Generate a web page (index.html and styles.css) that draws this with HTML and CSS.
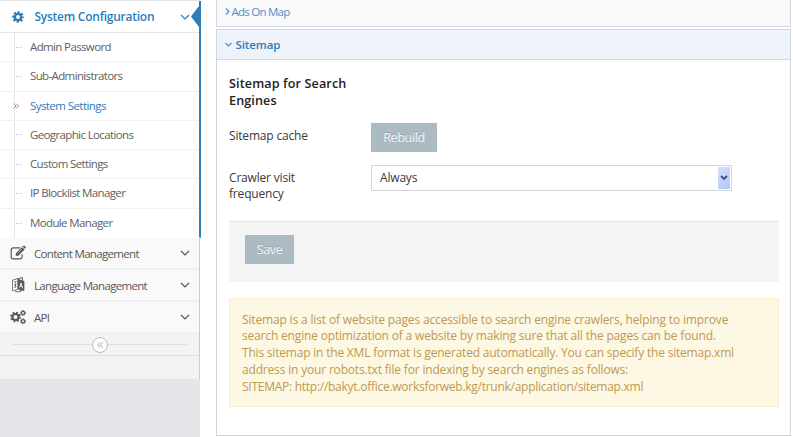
FILE: index.html
```html
<!DOCTYPE html>
<html lang="en">
<head>
<meta charset="utf-8">
<title>System Settings</title>
<link rel="stylesheet" href="styles.css">
</head>
<body>
<div class="page">
  <aside class="sidebar">
    <nav class="menu">
      <div class="group group-open">
        <a class="group-title active">
          <svg class="icon" viewBox="0 0 16 16"><g fill="none" stroke="currentColor"><circle cx="8" cy="8" r="3.600" stroke-width="2.700"/><circle cx="8" cy="8" r="5.400" stroke-width="2.600" stroke-dasharray="2.500 1.741" stroke-dashoffset="1.250"/></g></svg>
          <span>System Configuration</span>
          <svg class="chevron" viewBox="0 0 10 6"><path d="M1 1l4 4 4-4"/></svg>
        </a>
        <svg class="pointer" viewBox="0 0 8 21"><path d="M8 0v21L0 10.500z" fill="#2b7dbc"/></svg>
        <ul class="submenu">
          <li><span>Admin Password</span></li>
          <li><span>Sub-Administrators</span></li>
          <li class="current"><svg class="marker" viewBox="0 0 6 6"><path d="M.5.5L3 3 .5 5.500M3 .5L5.500 3 3 5.500"/></svg><span>System Settings</span></li>
          <li><span>Geographic Locations</span></li>
          <li><span>Custom Settings</span></li>
          <li><span>IP Blocklist Manager</span></li>
          <li><span>Module Manager</span></li>
        </ul>
      </div>
      <a class="group-title">
        <svg class="icon" viewBox="0 0 16 16"><g fill="none" stroke="currentColor"><path d="M10 2.800H3.300Q1.200 2.800 1.200 5v6.700q0 2.100 2.100 2.100H10q2.100 0 2.100-2.100V9.500" stroke-width="1.200"/></g><path d="M5.800 8.200L12 2l2.600 2.600-6.200 6.200H5.800zM12.600 1.400l.8-.7q.5-.4 1 .1l1.200 1.200q.5.500 0 1l-.7.800z" fill="currentColor"/><path d="M7.500 8.500l4.500-4.500" stroke="#f9f9f9" stroke-width=".6"/></svg>
        <span>Content Management</span>
        <svg class="chevron" viewBox="0 0 10 6"><path d="M1 1l4 4 4-4"/></svg>
      </a>
      <a class="group-title">
        <svg class="icon" viewBox="0 0 16 16"><path d="M2.500 3.200L8 1.500v10.800l-5.500 1.500z" fill="#fff" stroke="currentColor" stroke-width=".8"/><path d="M8 2.300l6 1.900v9.500l-6-1.800z" fill="currentColor" stroke="currentColor" stroke-width=".7"/><path d="M4 5.200l2.500-.7M5 5.500l1.200 1.300L4 8M4.200 10.600l2.300-1.300M5.500 7v3.200M7.500 1.800L12.500.6v2.900M4.800 14.100q3.500 2 6.600-.3l-1.600-.2" fill="none" stroke="currentColor" stroke-width=".9"/><path d="M9.500 10.500L11 6l1.600 5.400M10 9l2 .5" fill="none" stroke="#f9f9f9" stroke-width=".9"/></svg>
        <span>Language Management</span>
        <svg class="chevron" viewBox="0 0 10 6"><path d="M1 1l4 4 4-4"/></svg>
      </a>
      <a class="group-title">
        <svg class="icon" viewBox="0 0 16 16"><g fill="none" stroke="currentColor"><circle cx="5.500" cy="8" r="3" stroke-width="2"/><circle cx="5.500" cy="8" r="4.500" stroke-width="1.700" stroke-dasharray="1.900 1.634"/><circle cx="13" cy="4" r="1.600" stroke-width="1.200"/><circle cx="13" cy="4" r="2.500" stroke-width="1" stroke-dasharray="1.100 .863"/><circle cx="13" cy="12.300" r="1.600" stroke-width="1.200"/><circle cx="13" cy="12.300" r="2.500" stroke-width="1" stroke-dasharray="1.100 .863"/></g></svg>
        <span>API</span>
        <svg class="chevron" viewBox="0 0 10 6"><path d="M1 1l4 4 4-4"/></svg>
      </a>
    </nav>
    <div class="collapse">
      <span class="rule"></span>
      <span class="knob"><svg viewBox="0 0 6 6"><path d="M3 .3L.6 3 3 5.700M5.700.3L3.300 3l2.400 2.700"/></svg></span>
      <span class="rule"></span>
    </div>
    <div class="sidebar-end"></div>
  </aside>
  <main class="content">
    <section class="panel panel-closed">
      <svg class="caret" viewBox="0 0 5 7"><path d="M1 .5l3 3-3 3"/></svg><span>Ads On Map</span>
    </section>
    <section class="panel panel-open">
      <header class="panel-head">
        <svg class="caret-down" viewBox="0 0 7 5"><path d="M.5 1l3 3 3-3"/></svg><span>Sitemap</span>
      </header>
      <div class="panel-body">
        <h2>Sitemap for Search<br>Engines</h2>
        <div class="row row-cache">
          <label>Sitemap cache</label>
          <button class="btn">Rebuild</button>
        </div>
        <div class="row row-freq">
          <label>Crawler visit<br>frequency</label>
          <div class="select"><span>Always</span><i class="drop"><svg viewBox="0 0 8 6"><path d="M1 1l3 3 3-3"/></svg></i></div>
        </div>
        <div class="actions"><button class="btn save">Save</button></div>
        <div class="note">
          <p class="n1">Sitemap is a list of website pages accessible to search engine crawlers, helping to improve</p>
          <p class="n2">search engine optimization of a website by making sure that all the pages can be found.</p>
          <p class="n3">This sitemap in the XML format is generated automatically. You can specify the sitemap.xml</p>
          <p class="n4">address in your robots.txt file for indexing by search engines as follows:</p>
          <p class="n5">SITEMAP: http://bakyt.office.worksforweb.kg/trunk/application/sitemap.xml</p>
        </div>
      </div>
    </section>
  </main>
</div>
</body>
</html>
```
FILE: styles.css
```css
* { box-sizing: border-box; }
body {
  margin: 0;
  background: #fff;
  font-family: "Open Sans", sans-serif;
  font-size: 12px;
  color: #393939;
  overflow: hidden;
}
h2, p, ul { margin: 0; padding: 0; }
svg { display: block; flex: none; }
span { white-space: nowrap; }
.page { display: flex; height: 437px; }

.sidebar {
  display: flex;
  flex-direction: column;
  width: 200px;
  height: 437px;
  flex: none;
  background: #e4e6e9;
  border-top: 1px solid #e5e5e5;
}
.menu { border-right: 1px solid #ccc; }
.group-title {
  display: flex;
  align-items: center;
  height: 32px;
  padding: 0 9px 0 10px;
  background: #f9f9f9;
  border-bottom: 2px solid #efefef;
  color: #585858;
  font-size: 11.500px;
  letter-spacing: -.68px;
}
.group-title .icon { width: 16px; height: 16px; margin-right: 8px; }
.chevron {
  width: 10px;
  height: 6px;
  margin-left: auto;
  fill: none;
  stroke: currentColor;
  stroke-width: 1.200;
}
.group-title.active {
  background: #fff;
  color: #2b7dbc;
  font-size: 12px;
  font-weight: 600;
  letter-spacing: -.25px;
  border-bottom: 1px solid #e5e5e5;
}
.active .icon { width: 14px; height: 14px; margin: 0 9.500px 0 1px; }
.group-open {
  position: relative;
  height: 237px;
  margin-right: -2px;
  background: #fff;
  border-right: 2px solid #2b7dbc;
  border-bottom: 1px solid #efefef;
}
.group-open .group-title { padding-right: 9px; }
.pointer { position: absolute; right: 0; top: 5px; width: 8px; height: 21px; }
.submenu {
  list-style: none;
  background: linear-gradient(90deg, #fff 14px, #dce8f2 14px, #dce8f2 15px, #fff 15px);
}
.submenu li {
  display: flex;
  align-items: center;
  height: 29.250px;
  border-bottom: 1px dotted #e4e4e4;
  color: #616161;
  font-size: 11.500px;
  letter-spacing: -.63px;
}
.submenu li span { padding-bottom: 1px; }
.submenu li:last-child { border-bottom: 0; }
.submenu li::before { content: ""; width: 6px; margin: 0 8px 0 16px; border-top: 1px dotted #b5cfe3; }
.submenu li.current { color: #2b7dbc; letter-spacing: -.57px; }
.submenu li.current::before { display: none; }
.marker { width: 6px; height: 6px; margin: 0 11px 0 13px; fill: none; stroke: #d3705f; stroke-width: 1; background: #fff; }
.collapse {
  display: flex;
  align-items: center;
  height: 22px;
  padding: 0 12px;
  background: #f3f3f3;
  border-bottom: 1px solid #e0e0e0;
  border-right: 1px solid #ccc;
}
.rule { flex: 1; height: 1px; background: #e0e0e0; }
.knob {
  display: flex;
  align-items: center;
  justify-content: center;
  width: 16px;
  height: 16px;
  border: 1px solid #bbb;
  border-radius: 50%;
  background: #fff;
}
.knob svg { width: 6px; height: 6px; fill: none; stroke: #aaa; stroke-width: 1; }
.sidebar-end { height: 23px; background: #f2f2f2; border-right: 1px solid #ccc; }

.content { width: 575px; margin-left: 16px; }
.panel { border: 1px solid #cdd8e3; }
.panel-closed {
  display: flex;
  align-items: center;
  height: 27px;
  padding: 0 0 4px 8px;
  border-top: 0;
  background: #f9f9f9;
  color: #4c8fcd;
  font-size: 11.500px;
  letter-spacing: -.75px;
}
.caret, .caret-down { fill: none; stroke: #4c8fbd; stroke-width: 1.100; }
.caret { width: 5px; height: 7px; margin-right: 1.500px; }
.caret-down { width: 7px; height: 5px; margin-right: 3.500px; }
.panel-open { margin-top: 2px; height: 407px; }
.panel-head {
  display: flex;
  align-items: center;
  height: 30px;
  padding: 0 0 1px 8px;
  border-bottom: 1px solid #cdd8e3;
  background: #eef3f9;
  color: #2b7dbc;
  font-size: 11.500px;
  font-weight: 600;
  letter-spacing: -.1px;
}
.panel-body { padding: 16px 11px 0 12px; }
h2 {
  color: #222;
  font-size: 12.600px;
  font-weight: 600;
  line-height: 16.800px;
  letter-spacing: .12px;
  white-space: nowrap;
}
.row { display: flex; line-height: 16.800px; letter-spacing: -.18px; }
.row label { width: 142px; white-space: nowrap; }
.row-cache { height: 29px; margin-top: 13px; }
.row-cache label { padding-top: 5px; }
.row-freq { height: 36px; margin-top: 13px; }
.row-freq label { padding-top: 5px; }
.btn {
  width: 66px;
  height: 29px;
  padding: 0;
  border: 0;
  background: #abbac3;
  color: #f2f5f7;
  font: 12.600px "Open Sans", sans-serif;
  letter-spacing: -.4px;
  text-shadow: 0 -1px 0 rgba(0, 0, 0, .15);
}
.select {
  display: flex;
  align-items: center;
  justify-content: space-between;
  width: 361px;
  height: 26px;
  padding: 0 1px 0 8px;
  border: 1px solid #d5d5d5;
}
.select span { padding-top: 1px; }
.drop {
  display: flex;
  align-items: center;
  justify-content: center;
  width: 12px;
  height: 22px;
  border-radius: 1px;
  background: linear-gradient(135deg, #d3e1fd, #b0c5f7);
}
.drop svg { width: 8px; height: 6px; fill: none; stroke: #3d5080; stroke-width: 1.800; }
.actions {
  height: 61px;
  margin-top: 20px;
  padding: 13px 16px;
  background: #f4f4f4;
  border-top: 1px solid #e5e5e5;
}
.save { width: 49px; }
.note {
  height: 109px;
  margin-top: 16px;
  padding: 13px 12px;
  border: 1px solid #fbeed5;
  background: #fcf8e3;
  color: #c09853;
  font-size: 12px;
  line-height: 16.800px;
  white-space: nowrap;
}
.n1 { letter-spacing: -.156px; }
.n2, .n4 { letter-spacing: -.174px; }
.n3 { letter-spacing: -.2px; }
.n5 { letter-spacing: -.265px; }
```
